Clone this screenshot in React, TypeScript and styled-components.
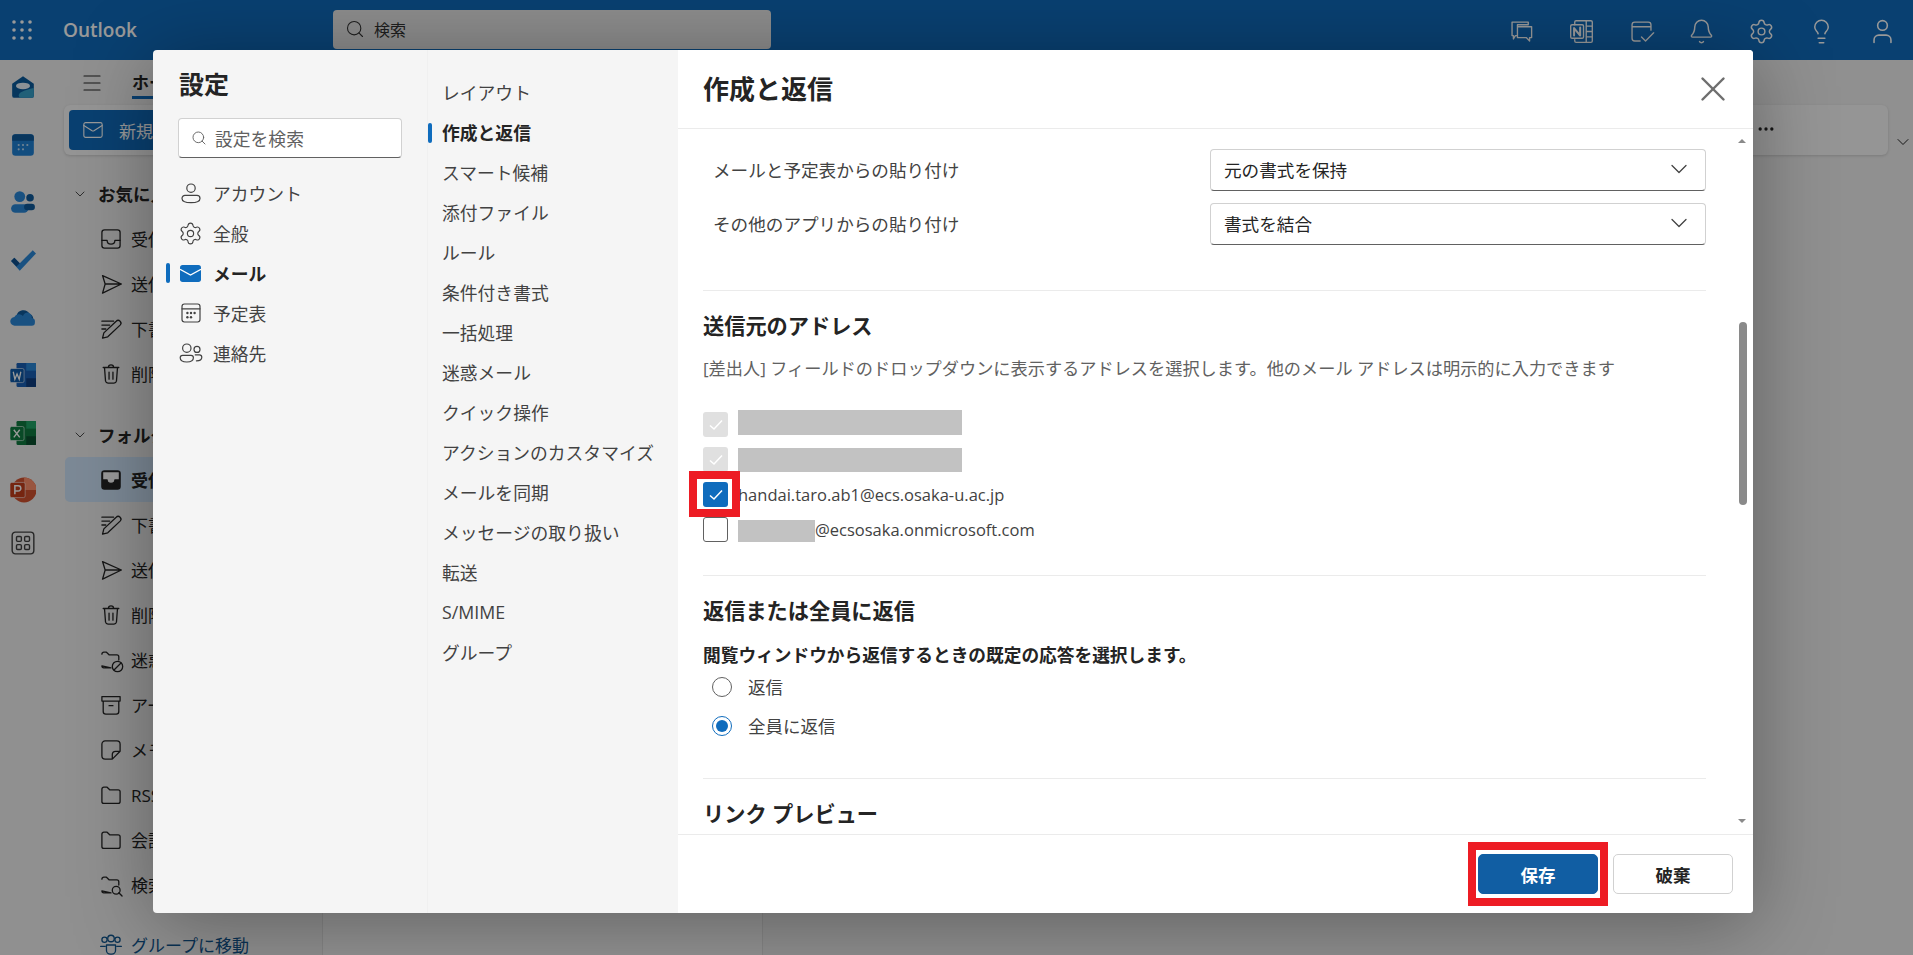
import styled, { createGlobalStyle } from "styled-components";
import { Bell, ChevronDown, Lightbulb, Mail, Menu, MoreHorizontal, Search, Settings, User, X } from "lucide-react";
import type { ReactNode } from "react";

const GlobalStyle = createGlobalStyle`
    html, body {
        margin: 0;
        width: 1913px;
        height: 955px;
        overflow: hidden;
        background: #fff;
        font-family: "Open Sans", "Noto Sans CJK JP", sans-serif;
        color: #242424;
    }
    * { box-sizing: border-box; }
`;

const Page = styled.div`
    position: relative;
    width: 1913px;
    height: 955px;
    overflow: hidden;
    display: flex;
    flex-direction: column;
`;

const Header = styled.header`
    height: 60px;
    flex: none;
    background: #0f6cbd;
    color: #fff;
    display: flex;
    align-items: center;
    padding-left: 11px;
`;

const Brand = styled.span`
    width: 270px;
    margin-left: 30px;
    font-size: 19px;
    font-weight: 600;
`;

const TopSearch = styled.div`
    width: 438px;
    height: 39px;
    margin-top: -2px;
    background: #eaeaea;
    color: #333;
    border-radius: 4px;
    display: flex;
    align-items: center;
    gap: 9px;
    padding-left: 12px;
    font-size: 16px;
`;

const TopIcons = styled.div`
    margin-left: auto;
    display: flex;
    align-items: center;
    gap: 33px;
    padding: 2px 16px 0 0;
`;

const Body = styled.div`
    flex: 1;
    display: flex;
    min-height: 0;
    background: #f0f0f0;
`;

const Rail = styled.nav`
    width: 53px;
    flex: none;
    background: #f0f0f0;
    display: flex;
    flex-direction: column;
    align-items: center;
    padding: 14px 7px 0 0;
    gap: 31.6px;

    & > :last-child {
        margin-top: -5px;
    }
`;

const Main = styled.div`
    flex: 1;
    display: flex;
    flex-direction: column;
    min-width: 0;
`;

const TabRow = styled.div`
    height: 45px;
    flex: none;
    display: flex;
    align-items: center;
    padding-left: 27px;
    gap: 28px;
    font-size: 17px;
`;

const Tab = styled.span`
    font-weight: 700;
    border-bottom: 3px solid #0f6cbd;
    line-height: 26px;
    margin-top: 4px;
`;

const RibbonRow = styled.div`
    display: flex;
    align-items: center;
    gap: 5px;
    padding-left: 11px;
    height: 50px;
    flex: none;

    & > svg {
        margin-top: 24px;
    }
`;

const Ribbon = styled.div`
    width: 1824px;
    height: 50px;
    background: #f8f8f8;
    border-radius: 6px;
    box-shadow: 0 1px 3px rgba(0, 0, 0, 0.15);
    display: flex;
    align-items: center;
    padding: 0 5px;
    justify-content: space-between;
`;

const RibbonMore = styled.span`
    display: flex;
    margin: -3px 107px 0 0;
`;

const NewMail = styled.div`
    width: 150px;
    height: 40px;
    background: #0f6cbd;
    color: #fff;
    border-radius: 4px;
    display: flex;
    align-items: center;
    gap: 15px;
    padding-left: 13px;
    font-size: 17px;
`;

const Workspace = styled.div`
    flex: 1;
    display: flex;
    min-height: 0;
`;

const FolderPane = styled.aside`
    width: 270px;
    flex: none;
    padding: 16px 0 0 12px;
    overflow: hidden;
    border-right: 1px solid #e0e0e0;
`;

const ListPane = styled.div`
    width: 440px;
    flex: none;
    background: #f5f5f5;
    border-right: 1px solid #e0e0e0;
`;

const FolderHeading = styled.div<{ $gap?: number }>`
    height: 45px;
    display: flex;
    align-items: center;
    gap: 10px;
    padding-left: 7px;
    font-size: 17.5px;
    font-weight: 700;
    margin-top: ${(p) => p.$gap ?? 0}px;
`;

const FolderItem = styled.div<{ $active?: boolean }>`
    height: 45px;
    display: flex;
    align-items: center;
    gap: 7px;
    padding-left: 33px;
    font-size: 17px;
    white-space: nowrap;
    border-radius: 5px;
    font-weight: ${(p) => (p.$active ? 700 : 400)};
    background: ${(p) => (p.$active ? "#cfe4fa" : "transparent")};
`;

const GroupLink = styled(FolderItem)`
    margin-top: 15px;
    color: #0f548c;
`;

const Scrim = styled.div`
    position: absolute;
    inset: 0;
    background: rgba(0, 0, 0, 0.4);
    padding: 50px 0 0 153px;
`;

const Modal = styled.div`
    width: 1600px;
    height: 863px;
    border-radius: 4px;
    overflow: hidden;
    background: #f5f5f5;
    box-shadow: 0 10px 80px rgba(0, 0, 0, 0.35);
    display: flex;
`;

const CategoryColumn = styled.div`
    width: 275px;
    flex: none;
    padding: 19px 0 0 13px;
    border-right: 1px solid #f0f0f0;
`;

const ModalName = styled.h2`
    margin: 0 0 0 13px;
    height: 30px;
    line-height: 30px;
    font-size: 25px;
    font-weight: 700;
`;

const SettingsSearch = styled.div`
    width: 224px;
    height: 40px;
    margin: 19px 0 15px 12px;
    background: #fff;
    border: 1px solid #d1d1d1;
    border-bottom-color: #616161;
    border-radius: 4px;
    display: flex;
    align-items: center;
    gap: 8px;
    padding-left: 12px;
    color: #616161;
    font-size: 17.8px;
`;

const CategoryItem = styled.div<{ $active?: boolean }>`
    position: relative;
    height: 40px;
    display: flex;
    align-items: center;
    gap: 12px;
    padding-left: 14px;
    font-size: 17.8px;
    color: ${(p) => (p.$active ? "#242424" : "#424242")};
    font-weight: ${(p) => (p.$active ? 700 : 400)};
`;

const CategoryIcon = styled.span`
    width: 21px;
    flex: none;
    display: flex;
    justify-content: center;
    color: #424242;
`;

const ActiveBar = styled.i`
    position: absolute;
    left: 0;
    top: 10px;
    width: 3.5px;
    height: 20px;
    border-radius: 2px;
    background: #0f6cbd;
`;

const SectionColumn = styled.div`
    width: 250px;
    flex: none;
    padding-top: 22px;
`;

const SectionItem = styled(CategoryItem)`
    padding-left: 14px;
    gap: 0;
`;

const SectionBar = styled(ActiveBar)`
    width: 4px;
    top: 11px;
`;

const ContentPanel = styled.section`
    flex: 1;
    min-width: 0;
    background: #fff;
    display: flex;
    flex-direction: column;
`;

const PanelHeader = styled.div`
    height: 79px;
    flex: none;
    border-bottom: 1px solid #ebebeb;
    display: flex;
    align-items: center;
    justify-content: space-between;
    padding: 0 19px 0 25px;
`;

const PanelTitle = styled.h1`
    margin: -2px 0 0;
    font-size: 26px;
    font-weight: 700;
`;

const CloseButton = styled.span`
    display: flex;
    color: #6e6e6e;
`;

const Scroller = styled.div`
    position: relative;
    flex: 1;
    min-height: 0;
    overflow: hidden;
    padding: 20px 47px 0 25px;
`;

const ScrollThumb = styled.div`
    position: absolute;
    right: 6px;
    top: 193px;
    width: 8px;
    height: 183px;
    border-radius: 4px;
    background: #8a8a8a;
`;

const ScrollArrow = styled.i<{ $down?: boolean }>`
    position: absolute;
    right: 7px;
    ${(p) => (p.$down ? "bottom: 11px;" : "top: 10px;")}
    border-left: 4px solid transparent;
    border-right: 4px solid transparent;
    ${(p) => (p.$down ? "border-top: 4px solid #8a8a8a;" : "border-bottom: 4px solid #8a8a8a;")}
`;

const PasteRow = styled.div`
    display: flex;
    align-items: center;
    height: 42px;
    margin-bottom: 12px;
    font-size: 17.6px;
    color: #424242;
`;

const PasteLabel = styled.span`
    width: 507px;
    padding: 0 0 2px 10px;
`;

const SelectBox = styled.div`
    flex: 1;
    height: 42px;
    border: 1px solid #d1d1d1;
    border-bottom-color: #616161;
    border-radius: 4px;
    display: flex;
    align-items: center;
    justify-content: space-between;
    padding: 0 12px 2px 13px;
    color: #242424;
`;

const Divider = styled.hr<{ $top: number }>`
    border: 0;
    height: 1px;
    margin: ${(p) => p.$top}px 0 0;
    background: #ebebeb;
`;

const SectionTitle = styled.h3`
    margin: 20px 0 0;
    height: 30px;
    line-height: 30px;
    font-size: 21.2px;
    font-weight: 700;
    white-space: nowrap;
`;

const Description = styled.p`
    margin: 16px 0 26px;
    line-height: 24px;
    font-size: 17.2px;
    color: #616161;
    white-space: nowrap;
`;

const CheckRow = styled.div`
    height: 35px;
    display: flex;
    align-items: center;
    font-size: 16.5px;
    color: #424242;
`;

const CheckMark = styled.div`
    position: relative;
    width: 25px;
    height: 25px;
    flex: none;
    margin-right: 10px;
`;

const CheckBox = styled.span<{ $state: "disabled" | "checked" | "empty" }>`
    display: flex;
    align-items: center;
    justify-content: center;
    width: 25px;
    height: 25px;
    border-radius: 3px;
    background: ${(p) => (p.$state === "disabled" ? "#e0e0e0" : p.$state === "checked" ? "#0f6cbd" : "#fff")};
    border: ${(p) => (p.$state === "empty" ? "1px solid #616161" : "none")};
`;

const Redaction = styled.span<{ $width: number; $drop: number; $height: number }>`
    display: block;
    width: ${(p) => p.$width}px;
    height: ${(p) => p.$height}px;
    margin-top: ${(p) => p.$drop}px;
    background: #c2c2c2;
`;

const Marker = styled.div<{ $inset: string }>`
    position: absolute;
    inset: ${(p) => p.$inset};
    border: 8px solid #ed1c24;
    pointer-events: none;
    z-index: 2;
`;

const ReplyPrompt = styled.div`
    margin-top: 17px;
    line-height: 24px;
    font-size: 17.7px;
    font-weight: 700;
    white-space: nowrap;
`;

const RadioRow = styled.div`
    height: 39px;
    display: flex;
    align-items: center;
    gap: 16px;
    padding-left: 9px;
    font-size: 17.5px;
    color: #424242;
`;

const Radio = styled.span<{ $on?: boolean }>`
    width: 20px;
    height: 20px;
    border-radius: 50%;
    border: 1px solid ${(p) => (p.$on ? "#0f6cbd" : "#616161")};
    display: flex;
    align-items: center;
    justify-content: center;

    &::after {
        content: "";
        width: 12px;
        height: 12px;
        border-radius: 50%;
        background: ${(p) => (p.$on ? "#0f6cbd" : "transparent")};
    }
`;

const Footer = styled.div`
    height: 79px;
    flex: none;
    border-top: 1px solid #ebebeb;
    display: flex;
    justify-content: flex-end;
    gap: 15px;
    padding: 19px 20px 0 0;
`;

const SaveWrap = styled.div`
    position: relative;
    height: 40px;
`;

const ActionButton = styled.button<{ $primary?: boolean }>`
    width: 120px;
    height: 40px;
    padding: 0;
    border-radius: 5px;
    font: 700 17.5px "Open Sans", "Noto Sans CJK JP", sans-serif;
    background: ${(p) => (p.$primary ? "#115ea3" : "#fff")};
    color: ${(p) => (p.$primary ? "#fff" : "#242424")};
    border: 1px solid ${(p) => (p.$primary ? "#115ea3" : "#d1d1d1")};
`;

const Ln = ({ children, size = 20 }: { children: ReactNode; size?: number }) => (
    <svg width={size} height={size} viewBox="0 0 20 20" fill="none" stroke="currentColor" strokeWidth="1" strokeLinecap="round" strokeLinejoin="round" style={{ flex: "none" }}>
        {children}
    </svg>
);

const folderIcons: Record<string, ReactNode> = {
    inbox: <><rect x="3" y="3" width="14" height="14" rx="2" /><path d="M3 11h4c0 2 1.5 3 3 3s3-1 3-3h4" /></>,
    inboxOn: <><rect x="3" y="3" width="14" height="14" rx="2" fill="#242424" /><path d="M3.5 3.5h13V10h-3.500c0 2-1.500 2.600-3 2.600S7 12 7 10H3.500z" fill="#fff" /></>,
    send: <path d="M3.5 3.5 18 10 3.500 17 5.500 10zM5.500 10h12" />,
    draft: <><path d="M3 4h9M3 7h6M3 10h3" /><path d="M3.500 17l1-4L14 4a2 2 0 0 1 3 3l-9.500 9z" /></>,
    trash: <path d="M4 5h12M8 5a2 2 0 0 1 4 0M5 5l.8 10.500A2 2 0 0 0 7.800 17h4.400a2 2 0 0 0 2-1.500L15 5M8.500 8.500v5.500M11.500 8.500v5.500" />,
    junk: <><path d="M3 5.500A1.500 1.500 0 0 1 4.500 4h2l2 2h6A1.500 1.500 0 0 1 16 7.500V10M10 16H4.500A1.500 1.500 0 0 1 3 14.500z" /><circle cx="15" cy="15" r="4" /><path d="M12.500 17.500l5-5" /></>,
    archive: <path d="M3 3.500h14v3.500H3zM4 7v8a2 2 0 0 0 2 2h8a2 2 0 0 0 2-2V7M8.500 10.500h3" />,
    note: <path d="M11 17H5.500A2.500 2.500 0 0 1 3 14.500v-9A2.500 2.500 0 0 1 5.500 3h9A2.500 2.500 0 0 1 17 5.500V11zM11 17v-3.500a2.500 2.500 0 0 1 2.500-2.500H17" />,
    folder: <path d="M3 5.500A1.500 1.500 0 0 1 4.500 4h2.500l2 2h6.500A1.500 1.500 0 0 1 17 7.500V15a1.500 1.500 0 0 1-1.500 1.500h-11A1.500 1.500 0 0 1 3 15z" />,
    search: <><path d="M3 5.500A1.500 1.500 0 0 1 4.500 4h2l2 2h6A1.500 1.500 0 0 1 16 7.500V10M10 16H4.500A1.500 1.500 0 0 1 3 14.500z" /><circle cx="14" cy="14" r="3" /><path d="M16 16l2.500 2.500" /></>,
};

const favorites = [["inbox", "受信トレイ"], ["send", "送信済みアイテム"], ["draft", "下書き"], ["trash", "削除済みアイテム"]];
const folders = [
    ["inboxOn", "受信トレイ"], ["draft", "下書き"], ["send", "送信済みアイテム"], ["trash", "削除済みアイテム"],
    ["junk", "迷惑メール"], ["archive", "アーカイブ"], ["note", "メモ"], ["folder", "RSS フィード"],
    ["folder", "会話の履歴"], ["search", "検索フォルダー"],
];

const sections = ["レイアウト", "作成と返信", "スマート候補", "添付ファイル", "ルール", "条件付き書式", "一括処理", "迷惑メール", "クイック操作", "アクションのカスタマイズ", "メールを同期", "メッセージの取り扱い", "転送", "S/MIME", "グループ"];

const WaffleIcon = () => (
    <svg width="22" height="22" viewBox="0 0 22 22" fill="currentColor" style={{ flex: "none" }}>
        {[3, 11, 19].flatMap((y) => [3, 11, 19].map((x) => <circle key={`${x}-${y}`} cx={x} cy={y} r="1.8" />))}
    </svg>
);

const railIcons: ReactNode[] = [
    <svg key="mail" width="26" height="26" viewBox="0 0 24 24"><path d="M2 9l10-7 10 7v11a2 2 0 0 1-2 2H4a2 2 0 0 1-2-2z" fill="#0a5a9c" /><ellipse cx="12" cy="11" rx="6.5" ry="3" fill="#e8f2fb" /><path d="M8 20c0-3 5-5 14-7v7a2 2 0 0 1-2 2H9z" fill="#37a0c9" /></svg>,
    <svg key="cal" width="26" height="26" viewBox="0 0 24 24"><rect x="2" y="2" width="20" height="20" rx="3" fill="#1f80d4" /><path d="M2 8V5a3 3 0 0 1 3-3h14a3 3 0 0 1 3 3v3z" fill="#0f5a9c" /><g fill="#bcdcf5"><circle cx="8" cy="12" r="1" /><circle cx="12" cy="12" r="1" /><circle cx="16" cy="12" r="1" /><circle cx="8" cy="16" r="1" /><circle cx="12" cy="16" r="1" /></g></svg>,
    <svg key="people" width="26" height="26" viewBox="0 0 24 24"><circle cx="9" cy="7" r="5" fill="#2b88d8" /><circle cx="18.5" cy="8" r="3.5" fill="#0f5a9c" /><rect x="1" y="14" width="16" height="8" rx="4" fill="#2b88d8" /><rect x="13" y="13.5" width="10" height="6" rx="3" fill="#0f5a9c" /></svg>,
    <svg key="todo" width="26" height="26" viewBox="0 0 24 24"><path d="M1 13l3-3 5 5L21 3l3 3L9 22z" fill="#2b88d8" /><path d="M1 13l3-3 5 5-3 3z" fill="#0f4f8c" /></svg>,
    <svg key="cloud" width="26" height="26" viewBox="0 0 24 24"><path d="M6 11a6.5 6.5 0 0 1 12-2 5 5 0 0 1 1 9H6z" fill="#0f5a9c" /><path d="M4.500 20a4 4 0 0 1-.5-8 5 5 0 0 1 8-1 4 4 0 0 1 8 2 3.500 3.500 0 0 1 3 4 3 3 0 0 1-3 3z" fill="#2b88d8" /></svg>,
    <svg key="word" width="26" height="26" viewBox="0 0 24 24"><rect x="6" y="1" width="18" height="22" rx="1" fill="#1a5fb4" /><rect x="15" y="1" width="9" height="7" fill="#2b88d8" /><rect x="15" y="15" width="9" height="8" fill="#0f3f80" /><rect x="0" y="6" width="13" height="13" rx="1.5" fill="#0f5aa8" stroke="#fff" strokeWidth="0.5" /><path d="M3 9l1.500 7 2-5 2 5L10 9" stroke="#fff" strokeWidth="1.2" fill="none" /></svg>,
    <svg key="excel" width="26" height="26" viewBox="0 0 24 24"><rect x="6" y="1" width="18" height="22" rx="1" fill="#0f7a40" /><rect x="15" y="1" width="9" height="7" fill="#21a366" /><rect x="15" y="15" width="9" height="8" fill="#0a5030" /><rect x="0" y="6" width="13" height="13" rx="1.5" fill="#107c41" stroke="#fff" strokeWidth="0.5" /><path d="M3.500 9l5.500 7M9 9l-5.500 7" stroke="#fff" strokeWidth="1.3" /></svg>,
    <svg key="ppt" width="26" height="26" viewBox="0 0 24 24"><circle cx="13" cy="12" r="11.5" fill="#d35230" /><path d="M13 .5A11.500 11.500 0 0 1 24.500 12H13z" fill="#ff8f6b" /><rect x="0" y="5" width="14" height="14" rx="1.5" fill="#c43e1c" stroke="#fff" strokeWidth="0.5" /><path d="M4.500 16V8h3a2.500 2.500 0 0 1 0 5h-3" stroke="#fff" strokeWidth="1.4" fill="none" /></svg>,
    <svg key="apps" width="26" height="26" viewBox="0 0 24 24" fill="none" stroke="#424242" strokeWidth="1.3"><rect x="2" y="2" width="20" height="20" rx="3" /><rect x="6" y="6" width="4.5" height="4.5" rx="1" /><rect x="13.5" y="6" width="4.5" height="4.5" rx="1" /><rect x="6" y="13.5" width="4.5" height="4.5" rx="1" /><rect x="13.5" y="13.5" width="4.5" height="4.5" rx="1" /></svg>,
];

const topIcons: ReactNode[] = [
    <Ln key="chat" size={27}><path d="M3 3h12v2H7v8H5.500L4 15.500V13H3zM7 6.500h10.500v8H16v2.500l-2.500-2.500H7z" /></Ln>,
    <Ln key="note" size={27}><path d="M6 2h11a1 1 0 0 1 1 1v14a1 1 0 0 1-1 1H6a1 1 0 0 1-1-1v-1M5 5V3a1 1 0 0 1 1-1M13.500 2v16M13.500 6H18M13.500 10H18M13.500 14H18" /><rect x="2" y="5" width="9.500" height="10" rx="1" /><path d="M4.500 13V7.500l4.500 5.500V7" strokeWidth="1.5" /></Ln>,
    <Ln key="todo" size={27}><path d="M17 9V5a2 2 0 0 0-2-2H5a2 2 0 0 0-2 2v10a2 2 0 0 0 2 2h4M3 6.500h14M10 14l3 3 6-6" /></Ln>,
    <Bell key="bell" size={27} strokeWidth={1.3} />,
    <Settings key="gear" size={27} strokeWidth={1.3} />,
    <Lightbulb key="bulb" size={27} strokeWidth={1.3} />,
    <User key="user" size={29} strokeWidth={1.3} />,
];

const categories: [string, ReactNode, boolean?][] = [
    ["アカウント", <Ln key="a" size={24}><circle cx="10" cy="6" r="3.5" /><path d="M2.500 14.500A2.500 2.500 0 0 1 5 12h10a2.500 2.500 0 0 1 2.500 2.500c0 2-3 3.500-7.500 3.500s-7.500-1.500-7.500-3.500z" /></Ln>],
    ["全般", <Settings key="g" size={25} strokeWidth={1.1} style={{ flex: "none" }} />],
    ["メール", <svg key="m" width="21" height="21" viewBox="0 0 20 20" style={{ flex: "none" }}><rect y="2" width="20" height="16" rx="2.5" fill="#0f6cbd" /><path d="M0 6l10 5.500L20 6" stroke="#fff" strokeWidth="1.3" fill="none" /></svg>, true],
    ["予定表", <Ln key="c" size={24}><rect x="2.500" y="2.500" width="15" height="15" rx="2" /><path d="M2.500 6.500h15" /><g stroke="none" fill="currentColor"><circle cx="7" cy="10" r="1" /><circle cx="10" cy="10" r="1" /><circle cx="13" cy="10" r="1" /><circle cx="7" cy="13.500" r="1" /><circle cx="10" cy="13.500" r="1" /></g></Ln>],
    ["連絡先", <Ln key="p" size={24}><circle cx="6.500" cy="6" r="3.500" /><circle cx="15" cy="7" r="2.500" /><path d="M1 14a2 2 0 0 1 2-2h7a2 2 0 0 1 2 2c0 2-2 3.500-5.500 3.500S1 16 1 14zM13.500 11.500H17a2 2 0 0 1 2 2c0 1.500-1.500 3-4.500 3" /></Ln>],
];

const Tick = ({ color }: { color: string }) => (
    <svg width="18" height="18" viewBox="0 0 18 18" fill="none" stroke={color} strokeWidth="1.5">
        <path d="M3 9.500 7 13l8-8.500" />
    </svg>
);

export default function App() {
    return (
        <Page>
            <GlobalStyle />
            <Header>
                <WaffleIcon />
                <Brand>Outlook</Brand>
                <TopSearch><Search size={20} strokeWidth={1.3} />検索</TopSearch>
                <TopIcons>{topIcons}</TopIcons>
            </Header>
            <Body>
                <Rail>{railIcons}</Rail>
                <Main>
                    <TabRow>
                        <Menu size={24} strokeWidth={1.1} />
                        <Tab>ホーム</Tab>
                    </TabRow>
                    <RibbonRow>
                        <Ribbon>
                            <NewMail><Mail size={22} strokeWidth={1.2} />新規メール</NewMail>
                            <RibbonMore><MoreHorizontal size={20} /></RibbonMore>
                        </Ribbon>
                        <ChevronDown size={20} strokeWidth={1.2} />
                    </RibbonRow>
                    <Workspace>
                        <FolderPane>
                            <FolderHeading><ChevronDown size={16} strokeWidth={1.2} />お気に入り</FolderHeading>
                            {favorites.map(([icon, label], i) => (
                                <FolderItem key={i}><Ln size={26}>{folderIcons[icon]}</Ln>{label}</FolderItem>
                            ))}
                            <FolderHeading $gap={16}><ChevronDown size={16} strokeWidth={1.2} />フォルダー</FolderHeading>
                            {folders.map(([icon, label], i) => (
                                <FolderItem key={i} $active={i === 0}><Ln size={26}>{folderIcons[icon]}</Ln>{label}</FolderItem>
                            ))}
                            <GroupLink>
                                <Ln size={26}><circle cx="5" cy="6" r="2" /><circle cx="10" cy="5" r="2.500" /><circle cx="15" cy="6" r="2" /><path d="M2 11h3.500M14.500 11H18M6.500 10h7v4a3 3 0 0 1-3 3h-1a3 3 0 0 1-3-3z" /></Ln>
                                グループに移動
                            </GroupLink>
                        </FolderPane>
                        <ListPane />
                    </Workspace>
                </Main>
            </Body>
            <Scrim>
                <Modal>
                    <CategoryColumn>
                        <ModalName>設定</ModalName>
                        <SettingsSearch><Search size={16} strokeWidth={1.4} />設定を検索</SettingsSearch>
                        {categories.map(([label, icon, active]) => (
                            <CategoryItem key={label} $active={active}>
                                {active && <ActiveBar />}
                                <CategoryIcon>{icon}</CategoryIcon>
                                {label}
                            </CategoryItem>
                        ))}
                    </CategoryColumn>
                    <SectionColumn>
                        {sections.map((label, i) => (
                            <SectionItem key={label} $active={i === 1}>
                                {i === 1 && <SectionBar />}
                                {label}
                            </SectionItem>
                        ))}
                    </SectionColumn>
                    <ContentPanel>
                        <PanelHeader>
                            <PanelTitle>作成と返信</PanelTitle>
                            <CloseButton><X size={42} strokeWidth={1.4} /></CloseButton>
                        </PanelHeader>
                        <Scroller>
                            <ScrollArrow />
                            <ScrollThumb />
                            <ScrollArrow $down />
                            <PasteRow>
                                <PasteLabel>メールと予定表からの貼り付け</PasteLabel>
                                <SelectBox>元の書式を保持<ChevronDown size={28} strokeWidth={1.1} color="#424242" /></SelectBox>
                            </PasteRow>
                            <PasteRow>
                                <PasteLabel>その他のアプリからの貼り付け</PasteLabel>
                                <SelectBox>書式を結合<ChevronDown size={28} strokeWidth={1.1} color="#424242" /></SelectBox>
                            </PasteRow>
                            <Divider $top={45} />
                            <SectionTitle>送信元のアドレス</SectionTitle>
                            <Description>[差出人] フィールドのドロップダウンに表示するアドレスを選択します。他のメール アドレスは明示的に入力できます</Description>
                            <CheckRow>
                                <CheckMark><CheckBox $state="disabled"><Tick color="#fff" /></CheckBox></CheckMark>
                                <Redaction $width={224} $drop={-5} $height={25} />
                            </CheckRow>
                            <CheckRow>
                                <CheckMark><CheckBox $state="disabled"><Tick color="#fff" /></CheckBox></CheckMark>
                                <Redaction $width={224} $drop={1} $height={24} />
                            </CheckRow>
                            <CheckRow>
                                <CheckMark>
                                    <CheckBox $state="checked"><Tick color="#fff" /></CheckBox>
                                    <Marker $inset="-11px -12px -10px -14px" />
                                </CheckMark>
                                handai.taro.ab1@ecs.osaka-u.ac.jp
                            </CheckRow>
                            <CheckRow>
                                <CheckMark><CheckBox $state="empty" /></CheckMark>
                                <Redaction $width={77} $drop={2} $height={22} />
                                @ecsosaka.onmicrosoft.com
                            </CheckRow>
                            <Divider $top={28} />
                            <SectionTitle>返信または全員に返信</SectionTitle>
                            <ReplyPrompt>閲覧ウィンドウから返信するときの既定の応答を選択します。</ReplyPrompt>
                            <RadioRow><Radio />返信</RadioRow>
                            <RadioRow><Radio $on />全員に返信</RadioRow>
                            <Divider $top={33} />
                            <SectionTitle>リンク プレビュー</SectionTitle>
                        </Scroller>
                        <Footer>
                            <SaveWrap>
                                <ActionButton $primary>保存</ActionButton>
                                <Marker $inset="-12px -10px" />
                            </SaveWrap>
                            <ActionButton>破棄</ActionButton>
                        </Footer>
                    </ContentPanel>
                </Modal>
            </Scrim>
        </Page>
    );
}
